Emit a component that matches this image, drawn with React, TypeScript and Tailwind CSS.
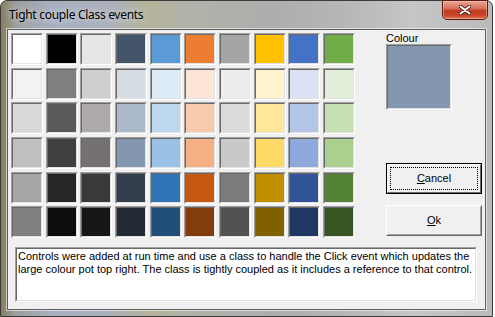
const SWATCHES = [
  ["bg-[#FFFFFF]", "bg-[#000000]", "bg-[#E7E6E6]", "bg-[#44546A]", "bg-[#5B9BD5]", "bg-[#ED7D31]", "bg-[#A5A5A5]", "bg-[#FFC000]", "bg-[#4472C4]", "bg-[#70AD47]"],
  ["bg-[#F2F2F2]", "bg-[#7F7F7F]", "bg-[#D0CECE]", "bg-[#D6DCE4]", "bg-[#DDEBF7]", "bg-[#FCE4D6]", "bg-[#EDEDED]", "bg-[#FFF2CC]", "bg-[#D9E1F2]", "bg-[#E2EFDA]"],
  ["bg-[#D9D9D9]", "bg-[#595959]", "bg-[#AEAAAA]", "bg-[#ACB9CA]", "bg-[#BDD7EE]", "bg-[#F8CBAD]", "bg-[#DBDBDB]", "bg-[#FFE699]", "bg-[#B4C6E7]", "bg-[#C6E0B4]"],
  ["bg-[#BFBFBF]", "bg-[#404040]", "bg-[#757171]", "bg-[#8497B0]", "bg-[#9BC2E6]", "bg-[#F4B084]", "bg-[#C9C9C9]", "bg-[#FFD966]", "bg-[#8EA9DB]", "bg-[#A9D08E]"],
  ["bg-[#A6A6A6]", "bg-[#262626]", "bg-[#3A3838]", "bg-[#333F4F]", "bg-[#2F75B5]", "bg-[#C65911]", "bg-[#7B7B7B]", "bg-[#BF8F00]", "bg-[#305496]", "bg-[#548235]"],
  ["bg-[#808080]", "bg-[#0D0D0D]", "bg-[#161616]", "bg-[#222B35]", "bg-[#1F4E78]", "bg-[#833C0C]", "bg-[#525252]", "bg-[#806000]", "bg-[#203764]", "bg-[#375623]"],
];

const ui = "font-['Liberation_Sans',Arial,sans-serif] text-[11px] leading-[13px] text-black";

// classic sunken 2px edge (SpecialEffect = fmSpecialEffectSunken)
function Sunken({ className, children }: { className: string; children?: React.ReactNode }) {
  return (
    <div className={`box-border border border-t-[#a0a0a0] border-l-[#a0a0a0] border-b-white border-r-white ${className}`}>
      <div className="box-border w-full h-full border border-t-[#696969] border-l-[#696969] border-b-[#e3e3e3] border-r-[#e3e3e3]">
        {children}
      </div>
    </div>
  );
}

function Swatch({ colour }: { colour: string }) {
  return (
    <div className="box-border w-[32px] h-[32px] border border-t-[#a0a0a0] border-l-[#a0a0a0] border-b-white border-r-white">
      <div className={`box-border w-full h-full border border-t-[#696969] border-l-[#696969] border-b-[#e3e3e3] border-r-[#e3e3e3] ${colour}`} />
    </div>
  );
}

function CloseButton() {
  return (
    <div className="mt-[-1px] mr-[4px] w-[46px] h-[20px] box-border rounded-b-[5px] border border-[#5a1d12] bg-[linear-gradient(180deg,#e9a596_0%,#d9735e_40%,#c23a1f_55%,#c8452a_80%,#e07a55_100%)] shadow-[inset_0_0_0_1px_rgba(255,210,200,0.45)] flex items-center justify-center">
      <svg width="12" height="10" viewBox="0 0 12 10" aria-hidden="true">
        <path d="M1.5 1.5 L10.5 8.5 M10.5 1.5 L1.5 8.5" stroke="#4a1a12" strokeWidth="3.6" strokeLinecap="round" />
        <path d="M1.5 1.5 L10.5 8.5 M10.5 1.5 L1.5 8.5" stroke="#ffffff" strokeWidth="2" strokeLinecap="round" />
      </svg>
    </div>
  );
}

export default function App() {
  return (
    <div className="w-[495px] h-[317px] bg-white overflow-hidden">
      <div className="w-[493px] h-[317px] box-border border border-[#3b3b3b] rounded-t-[7px] bg-[linear-gradient(90deg,#86805f_0%,#9c9f9f_3%,#a7afbf_10%,#aab0bb_22%,#b5b39a_30%,#b2b2aa_38%,#adadad_55%,#b6b6b6_70%,#c6c6c6_84%,#bababa_100%)] flex flex-col">
        {/* title bar */}
        <div className="h-[28px] flex items-start justify-between">
          <div className="pl-[8px] pt-[6px] font-['Noto_Sans',sans-serif] text-[12px] leading-[16px] tracking-[-0.3px] text-black [text-shadow:0_0_7px_rgba(255,255,255,0.9)]">
            Tight couple Class events
          </div>
          <CloseButton />
        </div>

        {/* client area */}
        <div className="ml-[6px] w-[479px] h-[281px] box-border border border-[#5f5f5f] bg-[#f0f0f0] shadow-[0_0_0_1px_rgba(255,255,255,0.55)] flex flex-col">
          <div className="flex">
            <div className="ml-[3px] mt-[3px] w-[347px] h-[208px] grid grid-cols-[repeat(10,34.667px)] grid-rows-[repeat(6,34.667px)]">
              {SWATCHES.flat().map((c, i) => (
                <Swatch key={i} colour={c} />
              ))}
            </div>

            <div className={`ml-[28px] mt-[3px] w-[96px] flex flex-col ${ui}`}>
              <div className="h-[11px] leading-[11px]">Colour</div>
              <Sunken className="w-[66px] h-[66px]">
                <div className="w-full h-full bg-[#8497B0]" />
              </Sunken>

              <div className="mt-[53px] w-[96px] h-[31px] box-border border border-black bg-[#f0f0f0]">
                <div className="box-border w-full h-full border border-t-white border-l-white border-b-[#696969] border-r-[#696969] p-[2px]">
                  <div className="box-border w-full h-full border border-dotted border-black flex items-center justify-center">
                    <span>
                      <span className="underline">C</span>ancel
                    </span>
                  </div>
                </div>
              </div>

              <div className="mt-[11px] w-[96px] h-[31px] box-border border border-t-white border-l-white border-b-[#696969] border-r-[#696969] bg-[#f0f0f0]">
                <div className="box-border w-full h-full border border-t-[#f0f0f0] border-l-[#f0f0f0] border-b-[#a0a0a0] border-r-[#a0a0a0] flex items-center justify-center">
                  <span>
                    <span className="underline">O</span>k
                  </span>
                </div>
              </div>
            </div>
          </div>

          <Sunken className="ml-[7px] mt-[6px] w-[462px] h-[55px]">
            <div className={`w-full h-full bg-white pl-[1px] pt-[1px] ${ui}`}>
              Controls were added at run time and use a class to handle the Click event which updates the large colour pot top right. The class is tightly coupled as it includes a reference to that control.
            </div>
          </Sunken>
        </div>
      </div>
    </div>
  );
}
